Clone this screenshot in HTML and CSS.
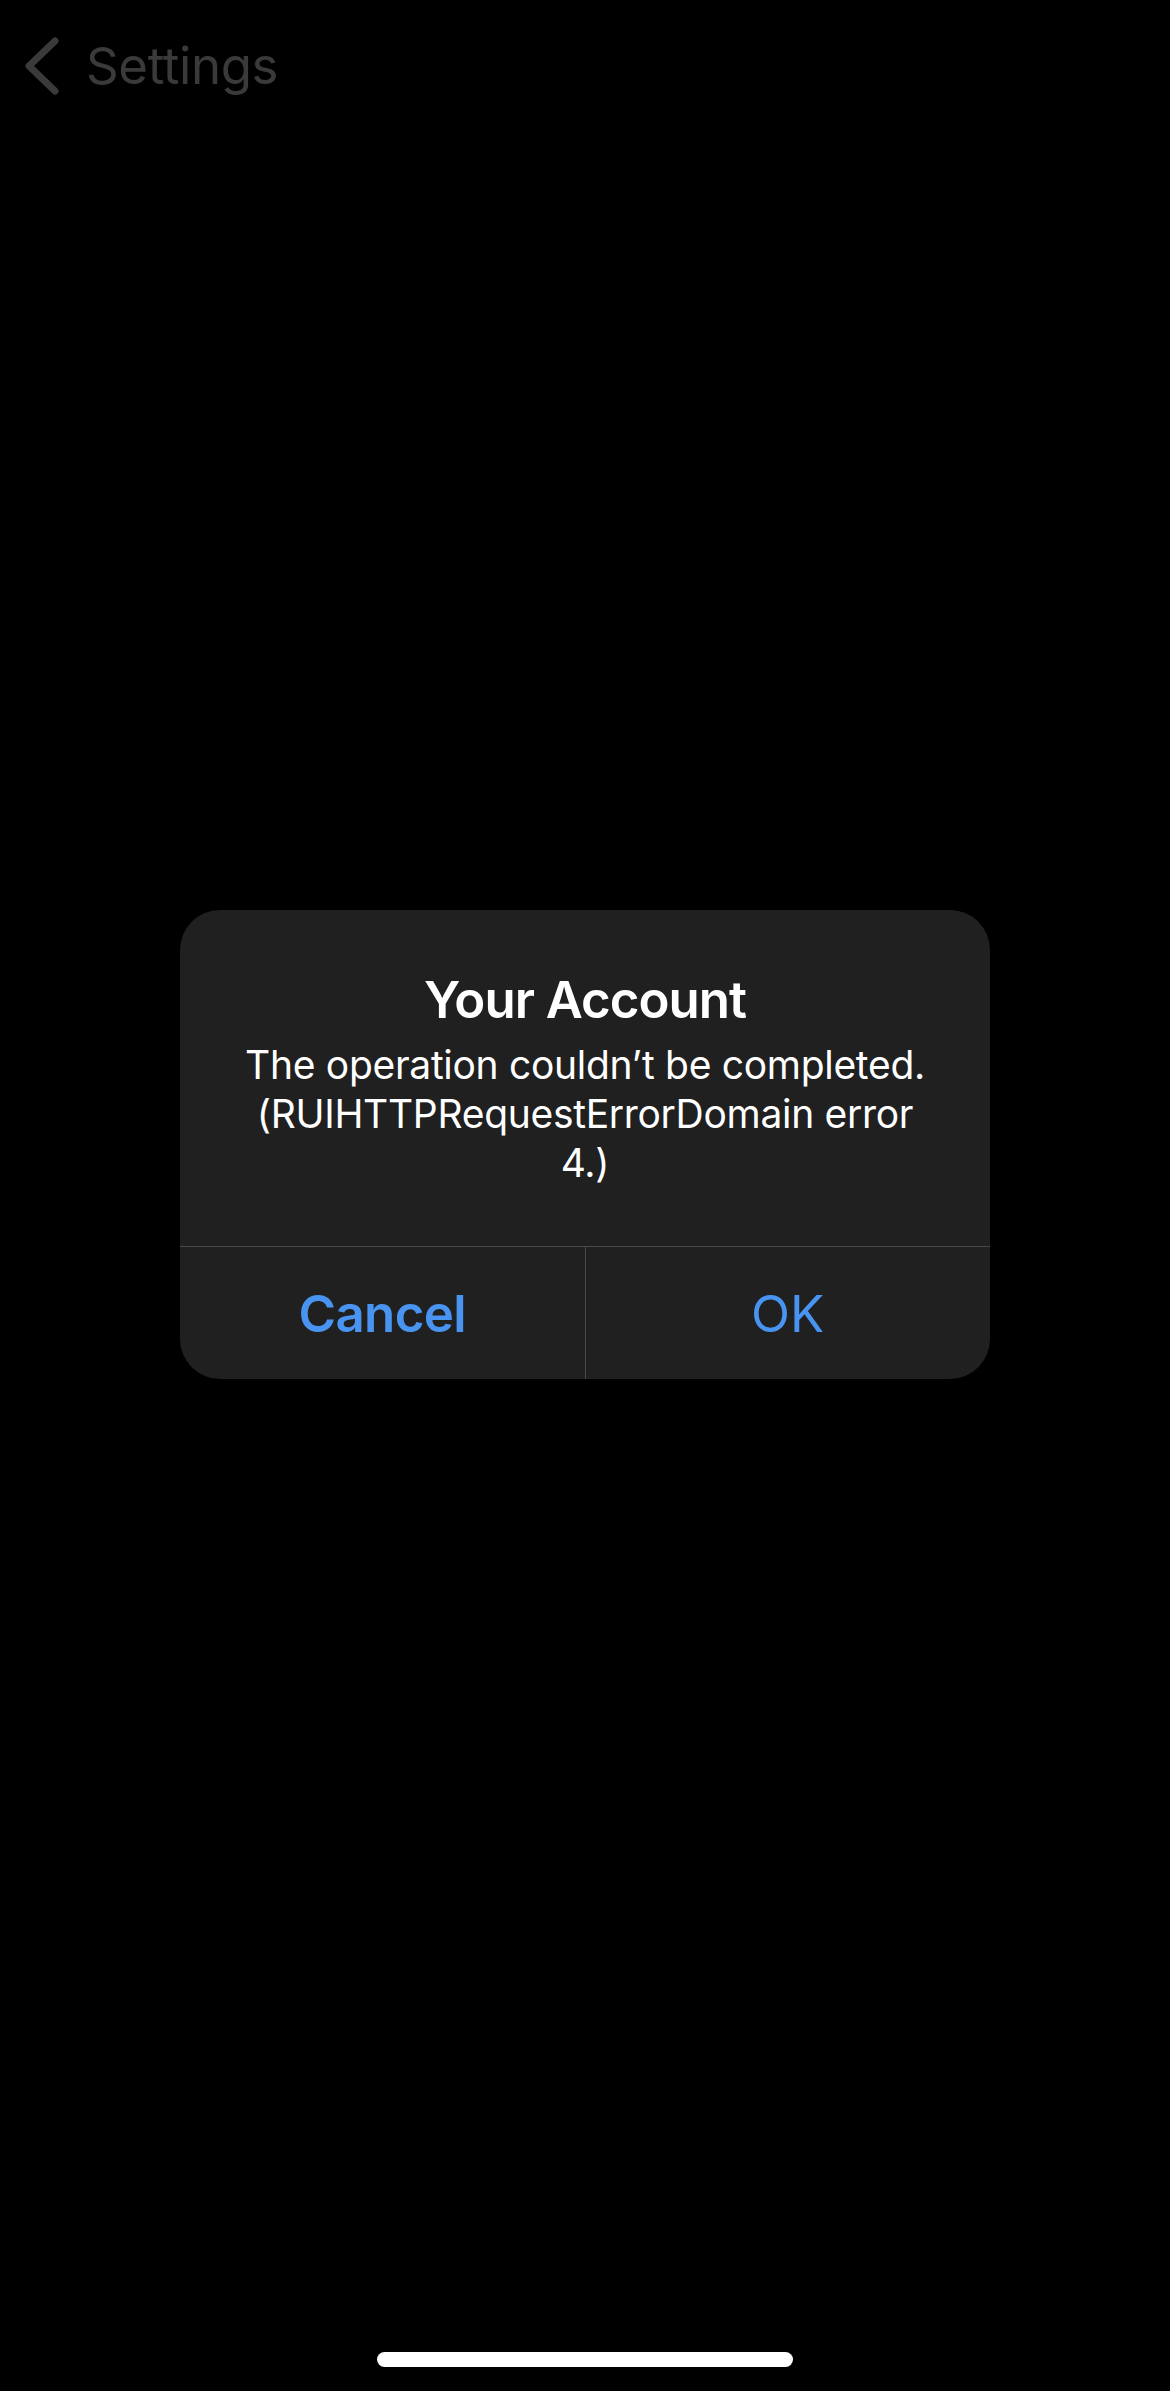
FILE: index.html
```html
<!DOCTYPE html>
<html lang="en">
<head>
    <meta charset="UTF-8">
    <meta name="viewport" content="width=device-width, initial-scale=1.0">
    <title>Settings</title>
    <link rel="stylesheet" href="styles.css">
</head>
<body>
    <div class="screen">
        <nav class="nav-bar">
            <a class="back" href="#">
                <svg class="back-chevron" width="36" height="58" viewBox="0 0 36 58">
                    <path d="M31 4 L5 29 L31 54" fill="none" stroke="currentColor" stroke-width="7" stroke-linecap="round" stroke-linejoin="round"/>
                </svg>
                <span>Settings</span>
            </a>
        </nav>

        <div class="alert">
            <div class="alert-body">
                <div class="alert-title">Your Account</div>
                <div class="alert-message">The operation couldn’t be completed. (RUIHTTPRequestErrorDomain error 4.)</div>
            </div>
            <div class="alert-actions">
                <button class="alert-btn preferred">Cancel</button>
                <button class="alert-btn">OK</button>
            </div>
        </div>

        <div class="home-indicator"></div>
    </div>
</body>
</html>
```

FILE: styles.css
```css
html, body {
    margin: 0;
    padding: 0;
    background: #000;
}

body {
    font-family: 'Inter', 'Roboto', sans-serif;
    color: #fff;
}

.screen {
    width: 1170px;
    height: 2391px;
    display: flex;
    flex-direction: column;
}

.nav-bar {
    height: 130px;
    padding: 36px 0 0 24px;
    box-sizing: border-box;
}

.back {
    display: flex;
    align-items: center;
    gap: 26px;
    color: #3a3a3a;
    text-decoration: none;
    font-size: 51px;
    line-height: 60px;
    letter-spacing: -0.4px;
}

.back-chevron {
    display: block;
}

.alert {
    width: 810px;
    margin: 780px auto 0;
    background: #202020;
    border-radius: 40px;
    overflow: hidden;
}

.alert-body {
    padding: 59px 56px 59px;
    text-align: center;
    border-bottom: 1px solid #4a4a4a;
}

.alert-title {
    font-size: 51px;
    font-weight: 600;
    line-height: 61px;
    letter-spacing: -1px;
}

.alert-message {
    margin-top: 10px;
    font-size: 39px;
    line-height: 49px;
    letter-spacing: -0.3px;
}

.alert-actions {
    display: flex;
    height: 132px;
}

.alert-btn {
    flex: 1;
    background: none;
    border: none;
    color: #4894f0;
    font-family: inherit;
    font-size: 51px;
    padding: 0;
    cursor: pointer;
}

.alert-btn + .alert-btn {
    border-left: 1px solid #4a4a4a;
}

.alert-btn.preferred {
    font-weight: 600;
    letter-spacing: -0.6px;
}

.home-indicator {
    width: 416px;
    height: 15px;
    border-radius: 8px;
    background: #fff;
    margin: auto auto 24px;
}
```
